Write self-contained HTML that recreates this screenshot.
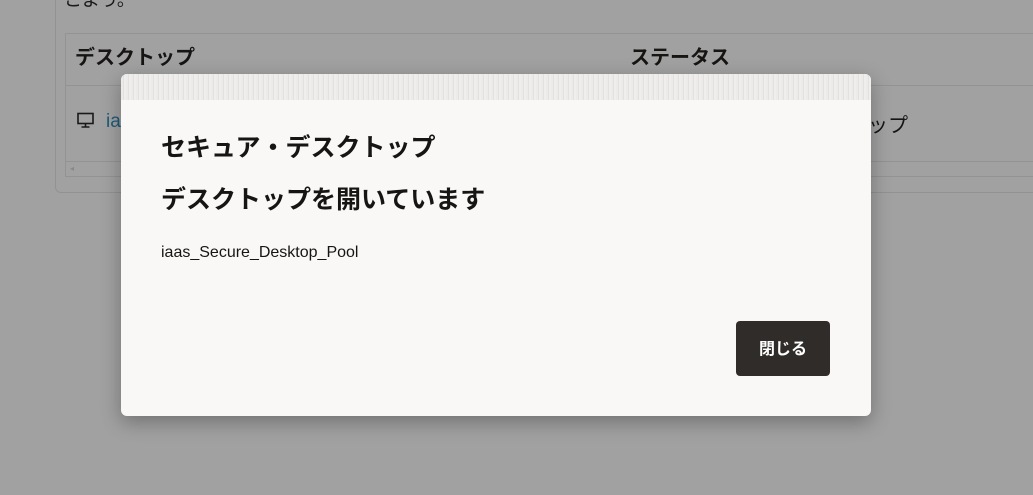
<!DOCTYPE html>
<html><head><meta charset="utf-8"><style>
*{margin:0;padding:0;box-sizing:border-box}
body{width:1033px;height:495px;overflow:hidden;background:#a1a1a1;font-family:"Liberation Sans","Noto Sans CJK JP",sans-serif;position:relative;color:#161513}
.abs{position:absolute}
</style></head><body>
<div class="abs" style="left:64px;top:-14px;font-size:18px;color:#1a1a1a">こよう。</div>
<div class="abs" style="left:55px;top:-10px;width:1000px;height:203px;border:1px solid #929292;border-radius:0 0 0 6px"></div>
<div class="abs" style="left:65px;top:33px;width:980px;height:144px;border:1px solid #939393"></div>
<div class="abs" style="left:65px;top:85px;width:980px;border-top:1px solid #939393"></div>
<div class="abs" style="left:65px;top:161px;width:980px;border-top:1px solid #939393"></div>
<div class="abs" style="left:75px;top:41px;font-size:20px;font-weight:bold">デスクトップ</div>
<div class="abs" style="left:630px;top:41px;font-size:20px;font-weight:bold">ステータス</div>
<svg class="abs" style="left:77px;top:112px" width="17" height="17" viewBox="0 0 17 17"><rect x="1" y="1.5" width="15" height="10" fill="none" stroke="#1a1a1a" stroke-width="1.6"/><path d="M8.5 11.5v3M4.5 15h8" stroke="#1a1a1a" stroke-width="1.6" fill="none"/></svg>
<div class="abs" style="left:106px;top:111px;font-size:19px;color:#1f5a78">ia</div>
<div class="abs" style="left:868px;top:109px;font-size:20px">ップ</div>
<div class="abs" style="left:70px;top:164px;font-size:8px;color:#888">◂</div>
<div class="abs" style="left:121px;top:74px;width:750px;height:342px;background:#f9f8f6;border-radius:6px;box-shadow:0 6px 20px rgba(0,0,0,.3);overflow:hidden">
 <div style="height:26px;background:repeating-linear-gradient(90deg,#ecebe9 0 2px,#e2e1df 2px 3px,#efeeec 3px 5px);"></div>
 <div class="abs" style="left:40px;top:54px;font-size:25px;font-weight:bold">セキュア・デスクトップ</div>
 <div class="abs" style="left:40px;top:106px;font-size:25px;font-weight:bold">デスクトップを開いています</div>
 <div class="abs" style="left:40px;top:170px;font-size:16px">iaas_Secure_Desktop_Pool</div>
 <div class="abs" style="left:615px;top:247px;width:94px;height:55px;background:#302c29;border-radius:4px;color:#fff;font-size:16px;font-weight:bold;display:flex;align-items:center;justify-content:center;padding-bottom:3px">閉じる</div>
</div>
</body></html>
